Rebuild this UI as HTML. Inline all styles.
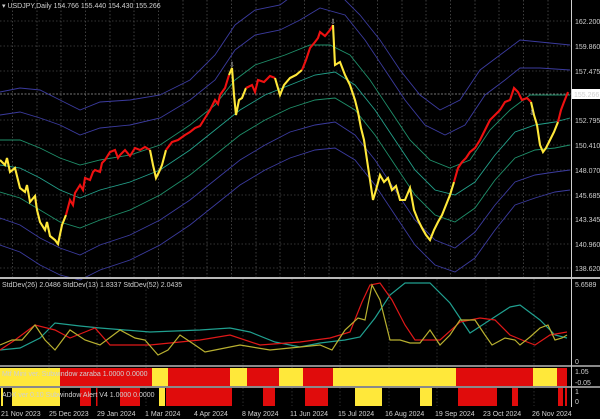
<!DOCTYPE html>
<html><head><meta charset="utf-8"><style>
html,body{margin:0;padding:0;background:#000;width:600px;height:419px;overflow:hidden}
svg{display:block}
text{font-family:"Liberation Sans",sans-serif;fill:#d0d0d0;font-size:7px}
</style></head><body>
<svg width="600" height="419" viewBox="0 0 600 419">
<rect width="600" height="419" fill="#000"/>
<g stroke="#8a8a8a" stroke-width="0.6" stroke-dasharray="1.5,2" opacity="0.75">
<path d="M12.5 0V277M37 0V277M61 0V277M85.5 0V277M110 0V277M134 0V277M158.5 0V277M183 0V277M207 0V277M231.5 0V277M256 0V277M280 0V277M304.5 0V277M329 0V277M353 0V277M377.5 0V277M402 0V277M426 0V277M450.5 0V277M475 0V277M499 0V277M523.5 0V277M548 0V277"/>
<path d="M0 21H571M0 46H571M0 71H571M0 120H571M0 145H571M0 170H571M0 195H571M0 219H571M0 244H571M0 268H571"/>
<path d="M49 279V406M97 279V406M146 279V406M195 279V406M243 279V406M292 279V406M340 279V406M389 279V406M437 279V406M486 279V406M534 279V406" opacity="0.7"/>
</g>
<path d="M0 94H571" stroke="#9a9a9a" stroke-width="0.8" stroke-dasharray="2,1.5"/>
<g fill="none" stroke-width="0.9">
<path stroke="#3b3b9e" d="M0 92L20 88L40 90L60 100L80 110L100 102L130 100L160 95L190 80L215 55L235 25L255 10L280 5L300 -10L320 -20L340 -5L360 15L380 40L400 70L420 95L440 110L460 100L480 70L500 55L520 40L540 42L570 45"/>
<path stroke="#3b3b9e" d="M0 115L20 112L40 118L60 125L80 135L100 128L130 125L160 118L190 100L215 80L235 50L255 35L280 30L300 20L320 8L345 15L365 40L385 70L405 100L425 125L445 135L465 125L485 95L505 80L520 68L540 68L570 70"/>
<path stroke="#1f8f6a" d="M0 140L20 140L40 148L60 158L80 165L100 160L130 155L160 145L190 125L215 105L235 80L255 65L285 55L310 45L330 45L350 55L370 80L390 110L410 140L430 160L450 168L470 160L490 130L510 110L530 95L550 95L570 95"/>
<path stroke="#23a08a" d="M0 165L20 168L40 178L60 190L80 198L100 190L130 182L160 170L190 150L215 130L240 110L265 95L290 85L315 75L335 72L355 85L375 110L395 140L415 170L435 190L455 195L475 182L495 155L515 132L535 125L555 122L570 118"/>
<path stroke="#1f8f6a" d="M0 192L20 198L40 210L60 222L80 228L100 220L130 210L160 195L190 175L215 155L240 135L265 120L290 108L315 100L335 98L355 110L375 135L395 165L415 195L435 215L455 222L475 208L495 180L515 158L535 150L555 148L570 145"/>
<path stroke="#3b3b9e" d="M0 218L20 225L40 238L60 248L80 255L100 245L130 235L160 220L190 200L215 180L240 160L265 145L290 132L315 125L335 122L355 135L375 160L395 190L415 220L435 240L455 248L475 232L495 205L515 182L535 175L555 172L570 170"/>
<path stroke="#3b3b9e" d="M0 245L20 252L40 265L60 275L80 280L100 270L130 260L160 245L190 225L215 205L240 185L265 170L290 158L315 150L335 148L355 160L375 185L395 215L415 245L435 265L455 272L475 258L495 230L515 205L535 198L555 192L570 190"/>
</g>
<g fill="none" stroke-width="2.1" stroke-linejoin="miter">
<path stroke="#ffe83a" d="M0 160L5 165L7 158L10 172L15 168L18 180L20 188L25 192L27 185L30 202L35 196L37 210L40 222L45 230L47 222L50 236L55 240L58 244L62 225L66 215"/>
<path stroke="#ee1111" d="M66 215L70 200L73 205L75 193L80 185L83 190L85 178L90 180L93 172L95 170L100 172L102 163L105 160L110 152L115 150L118 158L120 155L125 150L130 156L135 148L140 150L145 147L150 150"/>
<path stroke="#ffe83a" d="M150 150L153 165L156 178L159 172L162 165L166 150"/>
<path stroke="#ee1111" d="M166 150L172 142L178 140L185 135L190 132L195 128L200 126L205 118L210 110L215 100L218 104L220 95L225 88L229 75"/>
<path stroke="#ffe83a" d="M229 75L232 68L234 95L236 115L239 100L242 98L246 88"/>
<path stroke="#ee1111" d="M246 88L252 85L255 92L258 80L264 82L270 76L275 78"/>
<path stroke="#ffe83a" d="M275 78L280 95L284 85L290 78L296 75L302 70"/>
<path stroke="#ee1111" d="M302 70L306 60L310 48L315 42L318 38L320 32L325 36L330 30L333 25"/>
<path stroke="#ffe83a" d="M333 25L335 65L340 62L345 75L350 85L355 100L358 112L361 128L364 140L367 160L370 180L373 200L376 190L380 175L384 182L388 178L392 190L396 186L400 200L405 200L410 188L414 210L418 220L422 228L426 235L430 240L434 230L438 222L442 215L446 205L450 195L454 182"/>
<path stroke="#ee1111" d="M454 182L458 168L462 162L466 158L470 152L475 148L480 140L485 130L490 120L495 115L500 110L505 102L510 100L514 88L518 92L522 100L527 98L531 102"/>
<path stroke="#ffe83a" d="M531 102L534 115L537 125L540 145L543 152L546 148L550 140L554 132L558 122"/>
<path stroke="#ee1111" d="M558 122L561 110L564 102L568 92"/>
</g>
<g font-size="8"><text x="229" y="67" fill="#ffe83a">⇩</text><text x="330" y="24" fill="#ffe83a">⇩</text><text x="529" y="115" fill="#ffe83a">⇩</text></g>
<rect x="0" y="277" width="600" height="2" fill="#b8b8b8"/>
<rect x="0" y="365" width="600" height="2" fill="#8a8a8a"/>
<rect x="0" y="386" width="600" height="2" fill="#8a8a8a"/>
<rect x="571" y="0" width="1" height="407" fill="#cfcfcf"/>
<g fill="none" stroke-width="1.2">
<path stroke="#20a090" d="M0 350L20 348L40 338L55 323L80 326L100 328L150 332L200 330L230 328L250 332L275 342L300 347L320 343L345 340L360 337L375 318L390 295L405 283L430 283L450 303L470 333L490 320L510 307L520 305L540 320L555 335L567 338"/>
<path stroke="#e01818" d="M0 350L15 340L35 325L55 330L70 338L85 332L95 328L110 345L150 345L200 340L230 335L260 345L300 342L330 338L350 332L362 302L370 285L380 283L392 300L405 325L415 340L440 340L460 322L480 318L495 320L510 335L522 340L535 345L550 335L567 332"/>
<path stroke="#b8b030" d="M0 345L12 340L22 340L35 325L45 340L55 350L70 330L85 340L100 345L120 330L135 338L145 340L158 355L168 350L180 335L195 345L205 352L215 350L240 345L270 350L300 347L320 345L332 350L345 330L358 318L365 320L372 285L380 300L390 340L400 340L410 343L420 343L430 330L440 345L450 335L460 320L475 320L485 335L492 345L505 338L515 340L520 345L530 337L540 328L548 325L555 340L562 338L567 335"/>
</g>
<text x="2" y="287">StdDev(26) 2.0486  StdDev(13) 1.8337  StdDev(52) 2.0435</text>
<g>
<rect x="0" y="368" width="60" height="18" fill="#ffe83a"/>
<rect x="60" y="368" width="92" height="18" fill="#e00c0c"/>
<rect x="152" y="368" width="16" height="18" fill="#ffe83a"/>
<rect x="168" y="368" width="62" height="18" fill="#e00c0c"/>
<rect x="230" y="368" width="17" height="18" fill="#ffe83a"/>
<rect x="247" y="368" width="32" height="18" fill="#e00c0c"/>
<rect x="279" y="368" width="24" height="18" fill="#ffe83a"/>
<rect x="303" y="368" width="30" height="18" fill="#e00c0c"/>
<rect x="333" y="368" width="123" height="18" fill="#ffe83a"/>
<rect x="456" y="368" width="77" height="18" fill="#e00c0c"/>
<rect x="533" y="368" width="24" height="18" fill="#ffe83a"/>
<rect x="557" y="368" width="10" height="18" fill="#e00c0c"/>
</g>
<text x="2" y="376" fill="#e8c0a0">Mtf Mini ver. Subwindow zaraba 1.0000 0.0000</text>
<g>
<rect x="1" y="388" width="2" height="18" fill="#ffe83a"/>
<rect x="12" y="388" width="48" height="18" fill="#ffe83a"/>
<rect x="80" y="388" width="11" height="18" fill="#e00c0c"/>
<rect x="96" y="388" width="1.5" height="18" fill="#e00c0c"/>
<rect x="120" y="388" width="20" height="18" fill="#e00c0c"/>
<rect x="159" y="388" width="6" height="18" fill="#ffe83a"/>
<rect x="166" y="388" width="66" height="18" fill="#e00c0c"/>
<rect x="263" y="388" width="12" height="18" fill="#e00c0c"/>
<rect x="305" y="388" width="23" height="18" fill="#e00c0c"/>
<rect x="355" y="388" width="27" height="18" fill="#ffe83a"/>
<rect x="420" y="388" width="12" height="18" fill="#ffe83a"/>
<rect x="458" y="388" width="39" height="18" fill="#e00c0c"/>
<rect x="512" y="388" width="6" height="18" fill="#e00c0c"/>
<rect x="558" y="388" width="5" height="18" fill="#e00c0c"/>
<rect x="565" y="388" width="2" height="18" fill="#e00c0c"/>
</g>
<text x="2" y="397" fill="#d8b8a8">ADX ver 0.10 Subwindow Alert V4 1.0000 0.0000</text>
<text x="2" y="8">▾ USDJPY,Daily  154.766 155.440 154.430 155.266</text>
<g>
<text x="575" y="24">162.200</text>
<text x="575" y="49">159.860</text>
<text x="575" y="74">157.475</text>
<rect x="572" y="89" width="28" height="10" fill="#fff"/>
<text x="574" y="97" fill="#000">155.266</text>
<text x="575" y="123">152.795</text>
<text x="575" y="148">150.410</text>
<text x="575" y="173">148.070</text>
<text x="575" y="198">145.685</text>
<text x="575" y="222">143.345</text>
<text x="575" y="247">140.960</text>
<text x="575" y="271">138.620</text>
<text x="575" y="287">5.6589</text>
<text x="575" y="364">0</text>
<text x="575" y="374">1.05</text>
<text x="575" y="385">-0.05</text>
<text x="575" y="394">1</text>
<text x="575" y="404">0</text>
</g>
<g>
<text x="1" y="416">21 Nov 2023</text>
<text x="49" y="416">25 Dec 2023</text>
<text x="97" y="416">29 Jan 2024</text>
<text x="145" y="416">1 Mar 2024</text>
<text x="194" y="416">4 Apr 2024</text>
<text x="242" y="416">8 May 2024</text>
<text x="290" y="416">11 Jun 2024</text>
<text x="338" y="416">15 Jul 2024</text>
<text x="385" y="416">16 Aug 2024</text>
<text x="435" y="416">19 Sep 2024</text>
<text x="483" y="416">23 Oct 2024</text>
<text x="532" y="416">26 Nov 2024</text>
</g>
</svg>
</body></html>
